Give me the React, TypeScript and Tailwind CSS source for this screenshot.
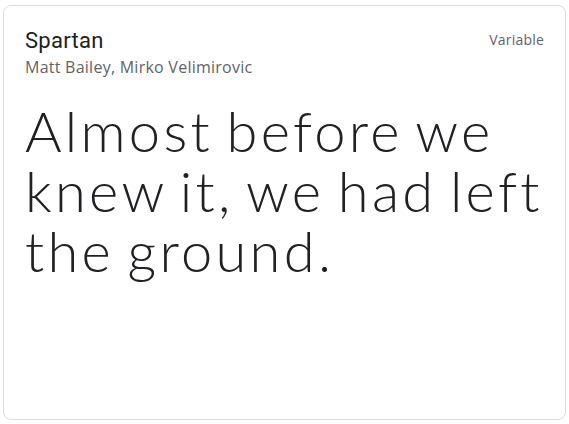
import React from "react";

export default function App() {
  return (
    <div className="w-[569px] h-[424px] bg-white pt-[5px] pl-[3px]">
      <div className="w-[563px] h-[415px] rounded-lg border border-[#dadce0] bg-white px-[21px] pt-[21px] flex flex-col">
        <div className="flex justify-between items-start">
          <div className="flex flex-col">
            <div className="text-[22px] leading-[28px] tracking-[0.3px] text-[#202124] font-['Roboto',sans-serif]">Spartan</div>
            <div className="text-[16px] leading-[24px] tracking-[0.25px] text-[#5f6368] font-['Open_Sans',sans-serif]">
              Matt Bailey, Mirko Velimirovic
            </div>
          </div>
          <div className="mt-[3px] text-[14px] leading-[20px] tracking-[0.2px] text-[#5f6368] font-['Open_Sans',sans-serif]">Variable</div>
        </div>
        <div className="mt-[22px] text-[56px] leading-[60px] font-light tracking-[3.3px] [word-spacing:-5px] text-[#202124] font-['Lato',sans-serif] whitespace-nowrap">
          Almost before we
          <br />
          knew it, we had left
          <br />
          the ground.
        </div>
      </div>
    </div>
  );
}
